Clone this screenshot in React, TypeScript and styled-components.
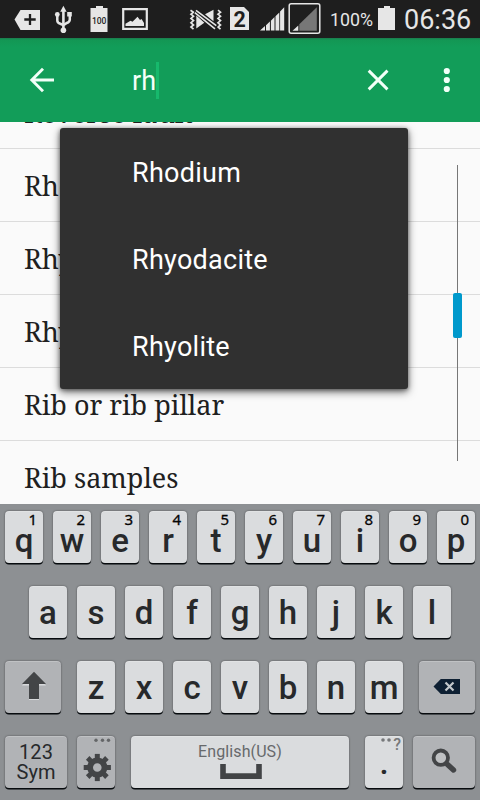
import React from 'react';
import styled, { createGlobalStyle } from 'styled-components';

const GlobalStyle = createGlobalStyle`
  * { box-sizing: border-box; }
  html, body { margin: 0; padding: 0; overflow: hidden; }
  body { font-family: Roboto, "Liberation Sans", sans-serif; }
  svg { display: block; flex: none; }
`;

const Screen = styled.div`
  width: 480px;
  height: 800px;
  display: flex;
  flex-direction: column;
  overflow: hidden;
  background: #fafafa;
`;

const StatusBar = styled.header`
  height: 38px;
  flex: none;
  display: flex;
  align-items: center;
  background: #1e1e1e;
  color: #e6e6e6;
`;

const StatusText = styled.span<{ $size: number; $left: number; $width: number }>`
  font-size: ${p => p.$size}px;
  line-height: 38px;
  padding-top: 1px;
  margin-left: ${p => p.$left}px;
  width: ${p => p.$width}px;
  white-space: nowrap;
  flex: none;
`;

const AppBar = styled.div`
  height: 84px;
  flex: none;
  display: flex;
  align-items: center;
  background: linear-gradient(#1c7b4e 0, #139754 2px, #129d59 9px);
`;

const SearchField = styled.div`
  flex: 1;
  margin-left: 48px;
  display: flex;
  align-items: center;
  color: #f4fff9;
  font-size: 27px;
  line-height: 38px;
  padding-top: 1px;
`;

const Caret = styled.span`
  width: 3px;
  height: 37px;
  margin-top: -1px;
  background: #17b96c;
`;

const Content = styled.main`
  height: 382px;
  flex: none;
  position: relative;
  overflow: hidden;
`;

const TermList = styled.ul`
  list-style: none;
  margin: -46px 0 0;
  padding: 0;
`;

const Term = styled.li`
  height: 73px;
  padding: 2px 24px 0;
  border-bottom: 1px solid #dcdcdc;
  color: #202020;
  font-family: "Noto Serif", "Droid Serif", "DejaVu Serif Condensed", "DejaVu Serif", serif;
  font-size: 27px;
  line-height: 69px;
  white-space: nowrap;
`;

const ScrollTrack = styled.div`
  position: absolute;
  top: 43px;
  right: 18px;
  width: 9px;
  height: 296px;
  display: flex;
  justify-content: center;
  background: linear-gradient(#777, #777) center / 1px 100% no-repeat;
`;

const ScrollThumb = styled.div`
  width: 9px;
  height: 45px;
  margin-top: 128px;
  border-radius: 2px;
  background: #0099cc;
`;

const Suggestions = styled.div`
  position: absolute;
  left: 60px;
  top: 6px;
  width: 348px;
  height: 261px;
  border-radius: 3px;
  background: #303030;
  box-shadow: 0 3px 9px rgba(0, 0, 0, 0.55), 0 1px 4px rgba(0, 0, 0, 0.4);
`;

const Suggestion = styled.div`
  height: 87px;
  padding: 2px 0 0 72px;
  line-height: 87px;
  font-size: 27px;
  letter-spacing: 0.27px;
  color: #fff;
`;

const Keyboard = styled.section`
  height: 296px;
  flex: none;
  display: flex;
  flex-direction: column;
  gap: 22px;
  padding-top: 7px;
  background: #8d9093;
`;

const KeyRow = styled.div`
  height: 53px;
  display: flex;
  justify-content: center;
  gap: 10px;
`;

const Key = styled.div<{ $width?: number; $dark?: boolean; $ml?: number; $mr?: number }>`
  position: relative;
  width: ${p => p.$width ?? 38}px;
  height: 52px;
  margin-left: ${p => p.$ml ?? 0}px;
  margin-right: ${p => p.$mr ?? 0}px;
  flex: none;
  display: flex;
  flex-direction: column;
  align-items: center;
  border-radius: 4px;
  background: ${p => (p.$dark ? '#b1b3b6' : '#dadcde')};
  box-shadow: 0 1.5px 0 #070b0e, 0 0 2px rgba(0, 0, 0, 0.5), inset 0 1px 0 rgba(255, 255, 255, 0.2);
  color: #27292b;
`;

const Letter = styled.span<{ $top: number }>`
  margin-top: ${p => p.$top}px;
  font-size: 33px;
  line-height: 40px;
  font-weight: 500;
`;

const KeyHint = styled.span`
  position: absolute;
  top: 0;
  right: 6px;
  font-family: "Noto Sans", sans-serif;
  font-size: 15px;
  line-height: 17px;
  -webkit-text-stroke: 0.3px #050505;
  color: #050505;
`;

const SymLabel = styled.span`
  margin-top: 6px;
  font-size: 20px;
  line-height: 20px;
  text-align: center;
  letter-spacing: 0.1px;
`;

const Language = styled.span`
  margin: 7px 0 4px;
  font-size: 16px;
  line-height: 17px;
  letter-spacing: 0.1px;
  color: #67696b;
`;

const Period = styled.span`
  margin-top: 7px;
  font-size: 33px;
  line-height: 40px;
  font-weight: 500;
`;

const PunctuationHint = styled.span`
  position: absolute;
  top: 0;
  right: 2px;
  display: flex;
  gap: 1px;
  font-size: 16px;
  line-height: 18px;
  font-weight: 500;
  color: #76787a;
`;

const TagIcon = () => (
  <svg width="43" height="38" viewBox="0 0 43 38">
    <path d="M14.5 19.5 20.5 10H40v20H20.5z" fill="#e6e6e6" />
    <path d="M30 14v11M24.3 19.5h11.4" stroke="#1e1e1e" strokeWidth="2.3" />
  </svg>
);

const UsbIcon = () => (
  <svg width="40" height="38" viewBox="43 0 40 38">
    <g fill="none" stroke="#e6e6e6" strokeWidth="2.5">
      <path d="M63.4 10v20" strokeWidth="2.6" />
      <path d="M57.3 15v5.5q0 2.5 3 3.3l3 1.2M69.8 15v4.5q0 2.5-3 3.5l-3 2" />
    </g>
    <g fill="#e6e6e6">
      <path d="m63.4 5.7 3.2 6h-6.4z" />
      <circle cx="63.4" cy="30.3" r="2.8" />
      <circle cx="57.3" cy="14.5" r="2.4" />
      <path d="M67.2 12h4.6v4.5h-4.6z" />
    </g>
  </svg>
);

const BatteryFullIcon = () => (
  <svg width="32" height="38" viewBox="83 0 32 38">
    <path d="M96 6h7v2h4.5v24h-17V8H96z" fill="#e6e6e6" />
    <text x="99.2" y="24" textAnchor="middle" fontSize="9.2" fontWeight="500" textLength="14.5" lengthAdjust="spacingAndGlyphs" fill="#1e1e1e" fontFamily="Roboto">100</text>
  </svg>
);

const PictureIcon = () => (
  <svg width="65" height="38" viewBox="115 0 65 38">
    <path d="M123.2 9.2h23.6v19.6h-23.6z" fill="none" stroke="#e6e6e6" strokeWidth="2.2" />
    <path d="M125.5 26v-2.2l5-3 2 1 5-5 2.5 3.2 1.5-1 2.5 4V26z" fill="#e6e6e6" />
  </svg>
);

const MuteIcon = () => (
  <svg width="45" height="38" viewBox="180 0 45 38">
    <g fill="none" stroke="#e6e6e6" strokeWidth="1.7">
      <path d="m190.5 10.2 3 2-2.5 2 2.5 2-2.5 2.2 2.5 2.2-2.5 2.2 2.5 2.2-2.5 2 2.5 2.2" />
      <path d="m218 10.2 2.5 2-2.5 2 2.5 2-2.5 2.2 2.5 2.2-2.5 2.2 2.5 2.2-2.5 2 2.5 2.2" />
    </g>
    <path d="M196.3 15.5V28.5l8-5.8zM205 14.3l8.5-4.6v11.5z" fill="#e6e6e6" />
    <path d="m195.5 10.8 20.5 17.8" stroke="#1e1e1e" strokeWidth="5" />
    <path d="m196 10.3 20.3 15.3M194.8 12.6 215 28.8" stroke="#e6e6e6" strokeWidth="1.6" />
  </svg>
);

const SimIcon = () => (
  <svg width="30" height="38" viewBox="225 0 30 38">
    <path d="M230 7h14l5 5v18h-19z" fill="#e6e6e6" />
    <text x="239.7" y="26.5" textAnchor="middle" fontSize="21.5" fontWeight="700" fill="#1e1e1e" fontFamily="Roboto">2</text>
  </svg>
);

const SignalIcon = () => (
  <svg width="70" height="38" viewBox="255 0 70 38">
    <g fill="#e6e6e6">
      <path d="M260 30.5 265 26v4.5zM266 25.2l3.9-3.7v9H266zM270.9 20.7l3.6-3.7v13.5h-3.6zM275.5 16.2l3.8-3.7v18h-3.8zM280.1 11.5l4.1-4.2v23.2h-4.1z" />
      <path d="m292.5 30.7 5.8-5.2v5.2z" />
    </g>
    <path d="m299.3 24.3 17.5-17v23.4h-17.5z" fill="#777" />
    <rect x="289.2" y="3.7" width="30.6" height="29.5" rx="2" fill="none" stroke="#e6e6e6" strokeWidth="1.5" />
  </svg>
);

const BatteryIcon = () => (
  <svg width="19" height="38" viewBox="377 0 19 38">
    <path d="M384 6h6v2h5v22h-17V8h6z" fill="#e6e6e6" />
  </svg>
);

const BackIcon = () => (
  <svg width="84" height="84" viewBox="0 0 84 84">
    <path d="M54 42H32M43 30.8 31.8 42 43 53.2" fill="none" stroke="#f2fff8" strokeWidth="2.9" />
  </svg>
);

const CloseIcon = () => (
  <svg width="60" height="84" viewBox="348 0 60 84">
    <path d="m368.7 32.6 18.8 18.8M387.5 32.6l-18.8 18.8" stroke="#f2fff8" strokeWidth="2.9" />
  </svg>
);

const MoreIcon = () => (
  <svg width="72" height="84" viewBox="408 0 72 84" fill="#f2fff8">
    <circle cx="446.8" cy="33" r="3.1" />
    <circle cx="446.8" cy="42" r="3.1" />
    <circle cx="446.8" cy="51" r="3.1" />
  </svg>
);

const ShiftIcon = () => (
  <svg width="56" height="52" viewBox="0 0 56 52">
    <path d="m29 12 12 12.5h-7V39H24V24.5h-7z" fill="#d8dadc" />
    <path d="m29 10.7 12 12.4h-7v15H24v-15h-7z" fill="#434547" />
  </svg>
);

const DeleteIcon = () => (
  <svg width="56" height="52" viewBox="0 0 56 52">
    <path d="m14.5 25.5 7.3-7.5H41v15H21.8z" fill="#0e2033" />
    <path d="m26.5 21.5 8 8M34.5 21.5l-8 8" stroke="#c4c9cd" strokeWidth="2.2" />
  </svg>
);

const teeth = [0, 45, 90, 135, 180, 225, 270, 315];

const GearIcon = () => (
  <svg width="38" height="52" viewBox="0 0 38 52">
    <g fill="#646668">
      <circle cx="19" cy="4.3" r="1.7" />
      <circle cx="25.5" cy="4.3" r="1.7" />
      <circle cx="31.5" cy="4.3" r="1.7" />
    </g>
    <g transform="translate(20.3 31.5)">
      <circle r="7.2" fill="none" stroke="#434547" strokeWidth="5.8" />
      {teeth.map(a => (
        <path key={a} d="M-2.5-13.6h5v5h-5z" fill="#434547" transform={`rotate(${a})`} />
      ))}
    </g>
  </svg>
);

const SpaceIcon = () => (
  <svg width="44" height="16" viewBox="-2 0 44 16">
    <path d="M3 0v12.1h36V0" fill="none" stroke="#424446" strokeWidth="5.6" />
  </svg>
);

const DotsIcon = () => (
  <svg width="13" height="8" viewBox="0 0 13 8" fill="#76787a">
    <circle cx="4" cy="4" r="1.8" />
    <circle cx="10" cy="4" r="1.8" />
  </svg>
);

const SearchIcon = () => (
  <svg width="62" height="52" viewBox="0 0 62 52">
    <path d="m34.5 28.5 6 5.5" stroke="#434547" strokeWidth="5.4" strokeLinecap="round" fill="none" />
    <circle cx="27.8" cy="21.7" r="7.2" fill="#bfc1c3" stroke="#434547" strokeWidth="3.8" />
  </svg>
);

const terms = ['Reverse fault', 'Rhodium', 'Rhyodacite', 'Rhyolite', 'Rib or rib pillar', 'Rib samples'];
const suggestions = ['Rhodium', 'Rhyodacite', 'Rhyolite'];

export default function App() {
  return (
    <>
      <GlobalStyle />
      <Screen>
        <StatusBar>
          <TagIcon />
          <UsbIcon />
          <BatteryFullIcon />
          <PictureIcon />
          <MuteIcon />
          <SimIcon />
          <SignalIcon />
          <StatusText $size={17.8} $left={5} $width={47}>100%</StatusText>
          <BatteryIcon />
          <StatusText $size={27} $left={8} $width={76}>06:36</StatusText>
        </StatusBar>
        <AppBar>
          <BackIcon />
          <SearchField>rh<Caret /></SearchField>
          <CloseIcon />
          <MoreIcon />
        </AppBar>
        <Content>
          <TermList>
            {terms.map(t => <Term key={t}>{t}</Term>)}
          </TermList>
          <ScrollTrack><ScrollThumb /></ScrollTrack>
          <Suggestions>
            {suggestions.map(s => <Suggestion key={s}>{s}</Suggestion>)}
          </Suggestions>
        </Content>
        <Keyboard>
          <KeyRow>
            {[...'qwertyuiop'].map((c, i) => (
              <Key key={c}><KeyHint>{(i + 1) % 10}</KeyHint><Letter $top={10}>{c}</Letter></Key>
            ))}
          </KeyRow>
          <KeyRow>
            {[...'asdfghjkl'].map(c => <Key key={c}><Letter $top={7}>{c}</Letter></Key>)}
          </KeyRow>
          <KeyRow>
            <Key $width={56} $dark $mr={6}><ShiftIcon /></Key>
            {[...'zxcvbnm'].map(c => <Key key={c}><Letter $top={7}>{c}</Letter></Key>)}
            <Key $width={56} $dark $ml={6}><DeleteIcon /></Key>
          </KeyRow>
          <KeyRow>
            <Key $width={62} $dark><SymLabel>123<br />Sym</SymLabel></Key>
            <Key $dark $mr={6}><GearIcon /></Key>
            <Key $width={218} $mr={6}><Language>English(US)</Language><SpaceIcon /></Key>
            <Key><PunctuationHint><DotsIcon />?</PunctuationHint><Period>.</Period></Key>
            <Key $width={62} $dark><SearchIcon /></Key>
          </KeyRow>
        </Keyboard>
      </Screen>
    </>
  );
}
